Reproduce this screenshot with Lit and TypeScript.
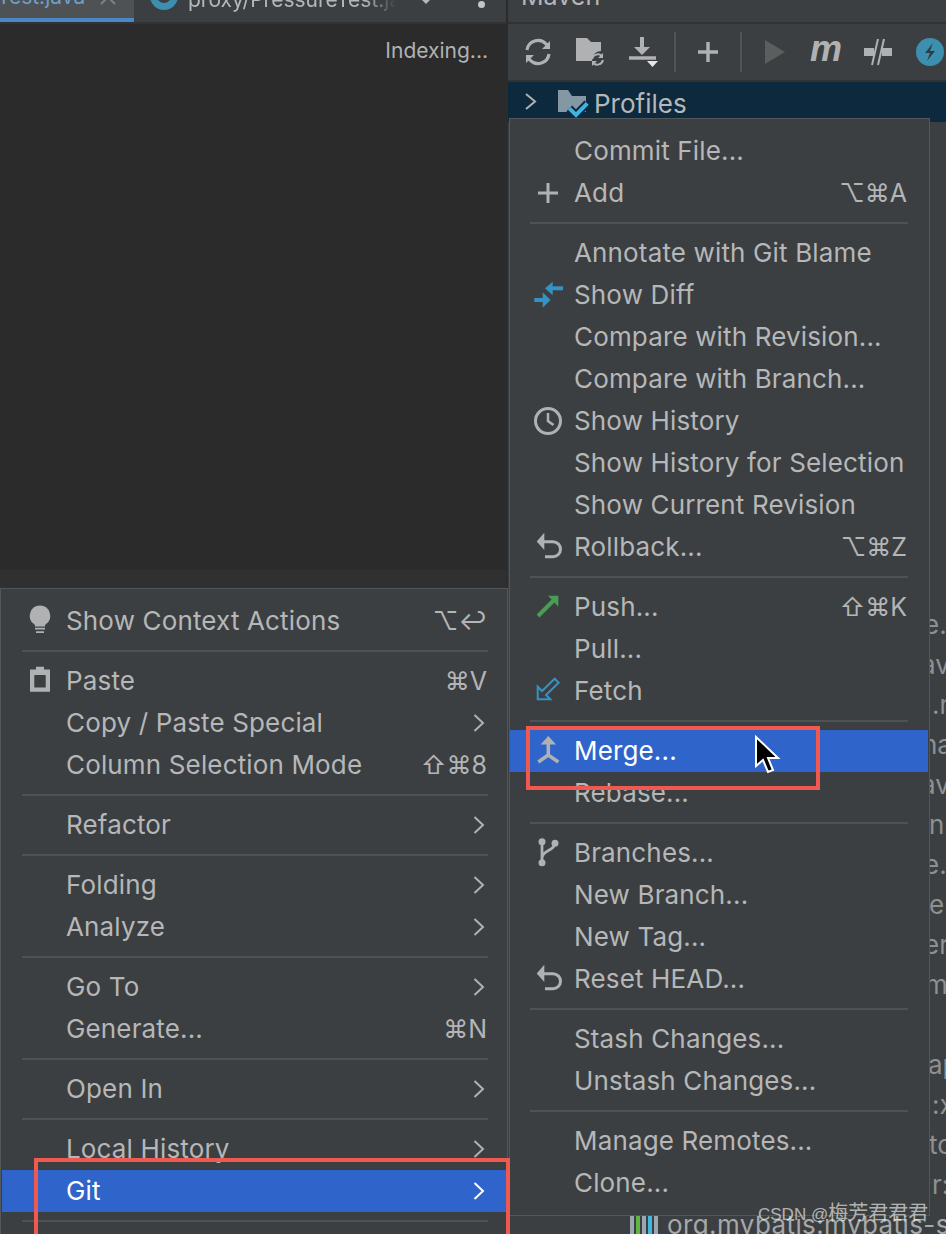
import { LitElement, html, css, svg } from "lit";
import { customElement } from "lit/decorators.js";

const G = "#afb1b3";
const B = "#3592c4";
const icons: Record<string, unknown> = {
  plus: svg`<path d="M20 10v20M10 20h20" stroke=${G} stroke-width="3" fill="none"/>`,
  diff: svg`<g fill=${B}><path d="M35 11.300h-11v4h11z"/><path d="M24.700 6.700v13.600L17 13.300z"/><path d="M6.300 23h9v4h-9z"/><path d="M14.700 17.300v15.400L22.500 25z"/></g>`,
  clock: svg`<circle cx="20" cy="20" r="12.500" stroke=${G} stroke-width="3" fill="none"/><path d="M20 12v8l5.500 4" stroke=${G} stroke-width="2.500" fill="none"/>`,
  rollback: svg`<path d="M16 14.700h9a7.500 7.500 0 0 1 0 15h-8" stroke=${G} stroke-width="3" fill="none"/><path d="M8.700 14.500L16.300 5.700V23z" fill=${G}/>`,
  push: svg`<path d="M10 29L26 13" stroke="#499c54" stroke-width="4" fill="none"/><path d="M20 8.700h10.300v11z" fill="#499c54"/>`,
  fetch: svg`<path d="M9.700 15.700V28.300H22.300L18 24 30.700 11.700 26.700 7.700 14 20z" stroke=${B} stroke-width="2" fill="none"/>`,
  merge: svg`<path d="M20.300 13V24L10.300 31M20.300 24L30.300 31" stroke=${G} stroke-width="3.500" fill="none"/><path d="M20.300 5L28 13.500H12.700z" fill=${G}/>`,
  branch: svg`<g fill=${G}><circle cx="14" cy="8.700" r="3.500"/><circle cx="14" cy="29.700" r="3.500"/><circle cx="27" cy="10.300" r="3.500"/></g><path d="M14 9v20M27 10C27 18 14 17 14 25" stroke=${G} stroke-width="2.800" fill="none"/>`,
  bulb: svg`<path d="M20 4.500a10.300 10.300 0 0 1 6 18.600c-.8.800-1 1.700-1 2.400H15c0-.7-.2-1.600-1-2.400a10.300 10.300 0 0 1 6-18.600z" fill=${G}/><path d="M15 27.700h10M16 31.200h8" stroke=${G} stroke-width="1.800" fill="none"/>`,
  clip: svg`<path fill-rule="evenodd" d="M10 8.500h6V5.700h8v2.800h6v22.200H10zM14.300 14v12.400h11.400V14z" fill=${G}/>`,
};

type Row = { t?: string; i?: string; k?: string; sub?: boolean; sel?: boolean; sep?: boolean };
const S: Row = { sep: true };

const leftMenu: Row[] = [
  { t: "Show Context Actions", i: "bulb", k: "⌥↩" }, S,
  { t: "Paste", i: "clip", k: "⌘V" },
  { t: "Copy / Paste Special", sub: true },
  { t: "Column Selection Mode", k: "⇧⌘8" }, S,
  { t: "Refactor", sub: true }, S,
  { t: "Folding", sub: true },
  { t: "Analyze", sub: true }, S,
  { t: "Go To", sub: true },
  { t: "Generate...", k: "⌘N" }, S,
  { t: "Open In", sub: true }, S,
  { t: "Local History", sub: true },
  { t: "Git", sub: true, sel: true }, S,
  { t: "" },
];

const rightMenu: Row[] = [
  { t: "Commit File..." },
  { t: "Add", i: "plus", k: "⌥⌘A" }, S,
  { t: "Annotate with Git Blame" },
  { t: "Show Diff", i: "diff" },
  { t: "Compare with Revision..." },
  { t: "Compare with Branch..." },
  { t: "Show History", i: "clock" },
  { t: "Show History for Selection" },
  { t: "Show Current Revision" },
  { t: "Rollback...", i: "rollback", k: "⌥⌘Z" }, S,
  { t: "Push...", i: "push", k: "⇧⌘K" },
  { t: "Pull..." },
  { t: "Fetch", i: "fetch" }, S,
  { t: "Merge...", i: "merge", sel: true },
  { t: "Rebase..." }, S,
  { t: "Branches...", i: "branch" },
  { t: "New Branch..." },
  { t: "New Tag..." },
  { t: "Reset HEAD...", i: "rollback" }, S,
  { t: "Stash Changes..." },
  { t: "Unstash Changes..." }, S,
  { t: "Manage Remotes..." },
  { t: "Clone..." },
];

const tree: [string, number][] = [
  ["e.", 416], ["av", 413], [".n", 424], ["ha", 414], ["av", 413], ["n", 421],
  ["e.", 416], ["e", 421], ["er", 416], ["m", 417], ["", 0], ["ap", 420],
  [":x", 424], ["to", 421], ["r:", 424],
];

@customElement("app-root")
export class AppRoot extends LitElement {
  static styles = css`
    :host { display: block; position: relative; width: 946px; height: 1234px; overflow: hidden;
      background: #3c3f41; font-family: Inter, "DejaVu Sans", "Noto Sans CJK SC", sans-serif; font-size: 26px; color: #b6b7b8; }
    .base { display: flex; height: 1234px; }
    .editor-col { width: 506px; display: flex; flex-direction: column; border-right: 2px solid #2c2c2c; }
    .tabs { height: 22px; flex: none; border-bottom: 2px solid #323232; display: flex; align-items: flex-start; background: #3c3f41; overflow: hidden; font-size: 21px; }
    .tab { display: flex; align-items: flex-start; height: 24px; white-space: nowrap; flex: none; box-sizing: border-box; overflow: hidden; }
    .tab.active { width: 134px; background: #4e5254; border-bottom: 6px solid #4a88c7; }
    .tab.active span { color: #6d9fc9; margin: -15px 0 0 -3px; line-height: 24px; flex: none; }
    .tab.active svg { margin-left: 14px; flex: none; }
    .tab.second { width: 262px; -webkit-mask-image: linear-gradient(90deg, #000 88%, transparent 100%); mask-image: linear-gradient(90deg, #000 88%, transparent 100%); }
    .ring { flex: none; width: 28px; height: 28px; border-radius: 50%; border: 7px solid #3d8fb0; box-sizing: border-box; background: #3c3f41; margin: -18px 10px 0 16px; }
    .tab.second span { line-height: 24px; margin-top: -12px; }
    .caret { flex: none; width: 0; height: 0; border: 4px solid transparent; border-top: 4px solid #b6b7b8; margin-left: 26px; }
    .kebab { width: 7px; height: 7px; border-radius: 50%; background: #c4c5c6; margin: 1px 0 0 48px; flex: none; }
    .code { flex: 1; background: #2b2b2b; display: flex; flex-direction: column; }
    .status { flex: none; height: 546px; box-sizing: border-box; padding: 13px 18px 0 0; text-align: right; font-size: 21px; line-height: 28px; color: #b1b2b3; }
    .gutter { flex: 1; background: #303030; }
    .maven { flex: 1; min-width: 0; display: flex; flex-direction: column; overflow: hidden; }
    .title { height: 22px; flex: none; border-bottom: 2px solid #323232; padding-left: 13px; overflow: hidden; font-size: 25px; }
    .title span { display: block; line-height: 30px; margin-top: -19px; }
    .toolbar { height: 56px; flex: none; display: flex; align-items: center; border-bottom: 2px solid #323232; padding-left: 4px; }
    .slot { flex: none; display: flex; justify-content: center; align-items: center; height: 40px; }
    .tsep { flex: none; width: 2px; height: 40px; background: #515456; margin: 0 2px; }
    .m { font: italic 700 36px "Liberation Sans", sans-serif; color: #afb1b3; line-height: 40px; margin-top: -6px; }
    .profiles { height: 40px; flex: none; background: #0d293e; display: flex; align-items: center; }
    .profiles svg { flex: none; overflow: visible; }
    .profiles span { margin: 2px 0 0 6px; }
    .tree { flex: 1; margin-top: 483px; color: #8e9092; white-space: nowrap; }
    .leaf { height: 40px; line-height: 40px; display: flex; }
    .leaf.lib { align-items: center; padding-left: 122px; color: #a6a8a9; letter-spacing: 0.4px; }
    .bars { display: flex; gap: 2px; margin-right: 9px; flex: none; }
    .bars i { width: 4px; height: 20px; }
    .menu { position: absolute; box-sizing: border-box; background: #3c3f41; border: 1px solid #545759; padding-top: 11px; padding-bottom: 11px; }
    .menu.l { left: 0; top: 588px; width: 508px; padding-left: 1px; padding-right: 1px; }
    .menu.r { left: 509px; top: 118px; width: 421px; padding-right: 1px; }
    .row { display: flex; align-items: center; height: 42px; white-space: nowrap; letter-spacing: 0.15px; }
    .row.sel { background: #2f65ca; color: #fff; }
    .ic { flex: none; width: 64px; box-sizing: border-box; padding-left: 18px; display: flex; }
    .ic svg { width: 40px; height: 40px; flex: none; }
    .label { flex: 1; margin-top: -2px; }
    .key { color: #b4b5b6; letter-spacing: 0; padding-right: 19px; font-size: 25px; }
    .r .key { padding-right: 21px; }
    .chev { flex: none; width: 12px; height: 20px; margin-right: 21px; }
    .sep { height: 2px; background: #4f5254; margin: 8px 18px 8px 20px; }
    .r .sep { margin-right: 20px; }
    .mark { position: absolute; border: 4px solid #f0594f; box-sizing: border-box; }
    .mark.a { left: 526px; top: 726px; width: 294px; height: 64px; }
    .mark.b { left: 34px; top: 1158px; width: 476px; height: 90px; }
    .cursor { position: absolute; left: 752px; top: 735px; width: 30px; height: 40px; }
    .wm { position: absolute; left: 758px; top: 1200px; font-size: 20px; line-height: 26px; color: rgba(255,255,255,.62); font-family: "Liberation Sans", "Noto Sans CJK SC", sans-serif; white-space: nowrap; }
    .wm span { font-size: 17px; }
  `;

  private menuRows(rows: Row[]) {
    return rows.map((r) => {
      if (r.sep) return html`<div class="sep"></div>`;
      return html`<div class="row ${r.sel ? "sel" : ""}">
        <div class="ic">${r.i ? html`<svg viewBox="0 0 40 40">${icons[r.i]}</svg>` : ""}</div>
        <div class="label">${r.t}</div>
        ${r.k ? html`<div class="key">${r.k}</div>` : ""}
        ${r.sub ? html`<svg class="chev" viewBox="0 0 12 20"><path d="M1.500 2l8.500 8-8.500 8" stroke=${r.sel ? "#fff" : G} stroke-width="2" fill="none"/></svg>` : ""}
      </div>`;
    });
  }

  render() {
    return html`
      <div class="base">
        <div class="editor-col">
          <div class="tabs">
            <div class="tab active"><span>Test.java</span><svg width="20" height="12" viewBox="0 0 20 12"><path d="M2-10l14 14M16-10L2 4" stroke="#7f8284" stroke-width="2"/></svg></div>
            <div class="tab second"><div class="ring"></div><span>proxy/PressureTest.java</span></div>
            <div class="caret"></div>
            <div class="kebab"></div>
          </div>
          <div class="code">
            <div class="status">Indexing...</div>
            <div class="gutter"></div>
          </div>
        </div>
        <div class="maven">
          <div class="title"><span>Maven</span></div>
          <div class="toolbar">
            <div class="slot" style="width:52px"><svg width="30" height="30" viewBox="0 0 30 30" fill="none" stroke=${G} stroke-width="3.200"><path d="M4 13a11 11 0 0 1 19-6l3 3"/><path d="M26 17a11 11 0 0 1-19 6l-3-3"/><path d="M27 4v8h-8z" fill=${G} stroke="none"/><path d="M3 26v-8h8z" fill=${G} stroke="none"/></svg></div>
            <div class="slot" style="width:52px"><svg width="34" height="34" viewBox="0 0 34 34" fill="none"><path d="M3 3h11l4 4h10v9a9 9 0 0 0-9 10H3z" fill=${G}/><path d="M19 24a6 6 0 0 1 10-3M30 25a6 6 0 0 1-10 3" stroke=${G} stroke-width="2"/><path d="M30 18v5h-5zM19 31v-5h5z" fill=${G}/></svg></div>
            <div class="slot" style="width:56px"><svg width="34" height="34" viewBox="0 0 34 34" fill="none"><path d="M15 2v13" stroke=${G} stroke-width="4"/><path d="M7 12h16l-8 8z" fill=${G}/><path d="M2 23h27" stroke=${G} stroke-width="3.500"/><path d="M20 26h11l-5.500 6z" fill="#e6e6e6"/></svg></div>
            <div class="tsep"></div>
            <div class="slot" style="width:60px"><svg width="24" height="24" viewBox="0 0 24 24"><path d="M12 2v20M2 12h20" stroke=${G} stroke-width="3.400"/></svg></div>
            <div class="tsep"></div>
            <div class="slot" style="width:62px"><svg width="22" height="26" viewBox="0 0 22 26"><path d="M1 1l20 12L1 25z" fill="#5b5e5f"/></svg></div>
            <div class="slot" style="width:40px"><span class="m">m</span></div>
            <div class="slot" style="width:64px"><svg width="30" height="30" viewBox="0 0 30 30" fill="none"><path d="M1 15h10M19 15h10" stroke=${G} stroke-width="8"/><path d="M15 2L9 28M21 2l-6 26" stroke=${G} stroke-width="2"/></svg></div>
            <div class="slot" style="width:40px"><svg width="28" height="28" viewBox="0 0 28 28"><circle cx="14" cy="14" r="14" fill="#3d8fb0"/><path d="M17 5L9 15h5l-3 8 8-10h-5z" fill="#2b3f49"/></svg></div>
          </div>
          <div class="profiles">
            <svg width="80" height="40" viewBox="0 0 80 40" fill="none">
              <path d="M18 12l9 7.500-9 7.500" stroke=${G} stroke-width="2"/>
              <path d="M50 8h10l4 6h14v16H50z" fill="#8497a4"/>
              <path d="M61.300 26.300L68 33 79.300 21.300" stroke="#0d293e" stroke-width="8"/>
              <path d="M61.300 26.300L68 33 79.300 21.300" stroke="#3fb4e0" stroke-width="4"/>
            </svg>
            <span>Profiles</span>
          </div>
          <div class="tree">
            ${tree.map(([t, x]) => html`<div class="leaf" style="padding-left:${x}px">${t}</div>`)}
            <div class="leaf lib">
              <div class="bars"><i style="background:#9aa7b0"></i><i style="background:#62b543"></i><i style="background:#9aa7b0"></i><i style="background:#40b6e0"></i><i style="background:#9aa7b0"></i></div>
              <span>org.mybatis:mybatis-spring</span>
            </div>
          </div>
        </div>
      </div>
      <div class="menu l">${this.menuRows(leftMenu)}</div>
      <div class="menu r">${this.menuRows(rightMenu)}</div>
      <div class="mark a"></div>
      <div class="mark b"></div>
      <svg class="cursor" viewBox="0 0 30 40"><path d="M4 2v29l7-6 5 12 5-2-5-12h10z" fill="#000" stroke="#fff" stroke-width="2"/></svg>
      <div class="wm"><span>CSDN @</span>梅芳君君君</div>
    `;
  }
}
